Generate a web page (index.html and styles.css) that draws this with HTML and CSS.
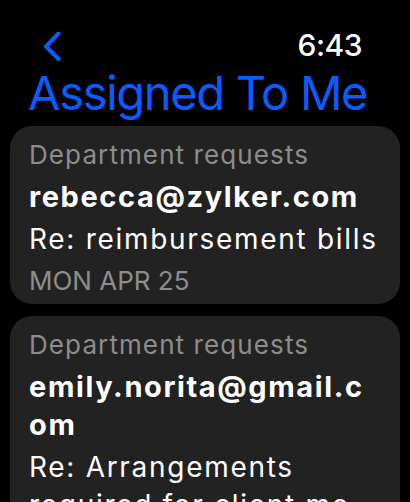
FILE: index.html
```html
<!doctype html>
<html>

<head>
    <link rel="stylesheet" href="styles.css">
</head>

<body>
    <div class="header">
        <svg class="back" width="18" height="30" viewBox="0 0 18 30">
            <path d="M15.5 2.5 L3 15.5 L15.5 28" fill="none" stroke="#0b5cff" stroke-width="4"
                stroke-linecap="round" stroke-linejoin="round" />
        </svg>
        <div class="time">6:43</div>
    </div>
    <h1 class="title">Assigned To Me</h1>

    <div class="list">
        <div class="card">
            <div class="dept">Department requests</div>
            <div class="from">rebecca@zylker.com</div>
            <div class="subject">Re: reimbursement bills</div>
            <div class="date">MON APR 25</div>
        </div>
        <div class="card">
            <div class="dept">Department requests</div>
            <div class="from">emily.norita@gmail.com</div>
            <div class="subject">Re: Arrangements required for client me<wbr>eting</div>
            <div class="date">FRI APR 22</div>
        </div>
    </div>
</body>

</html>
```
FILE: styles.css
```css
body {
    margin: 0;
    background-color: #000;
    color: #fff;
    font-family: Inter, "Noto Sans", sans-serif;
    overflow: hidden;
}

.header {
    display: flex;
    justify-content: space-between;
    align-items: center;
    height: 36px;
    padding: 27px 48px 0 43px;
}

.back {
    display: block;
    margin-top: 2px;
}

.time {
    font-size: 30px;
    font-weight: 500;
    letter-spacing: -0.5px;
    line-height: 36px;
}

.title {
    margin: 4px 0 0 28px;
    font-size: 47px;
    font-weight: 400;
    letter-spacing: -1.3px;
    line-height: 52px;
    color: #0b5cff;
    white-space: nowrap;
}

.list {
    display: flex;
    flex-direction: column;
    gap: 12px;
    padding: 7px 10px 0;
}

.card {
    background: #222;
    border-radius: 22px;
    padding: 10px 19px 4px;
    display: flex;
    flex-direction: column;
    gap: 4px;
    line-height: 38px;
}

.dept {
    font-size: 26px;
    letter-spacing: 1.1px;
    color: #8d8d8d;
}

.from {
    font-size: 29px;
    font-weight: 700;
    letter-spacing: 1.6px;
    word-break: break-all;
}

.subject {
    font-size: 28px;
    letter-spacing: 1.7px;
}

.date {
    font-size: 26px;
    color: #8d8d8d;
}
```
